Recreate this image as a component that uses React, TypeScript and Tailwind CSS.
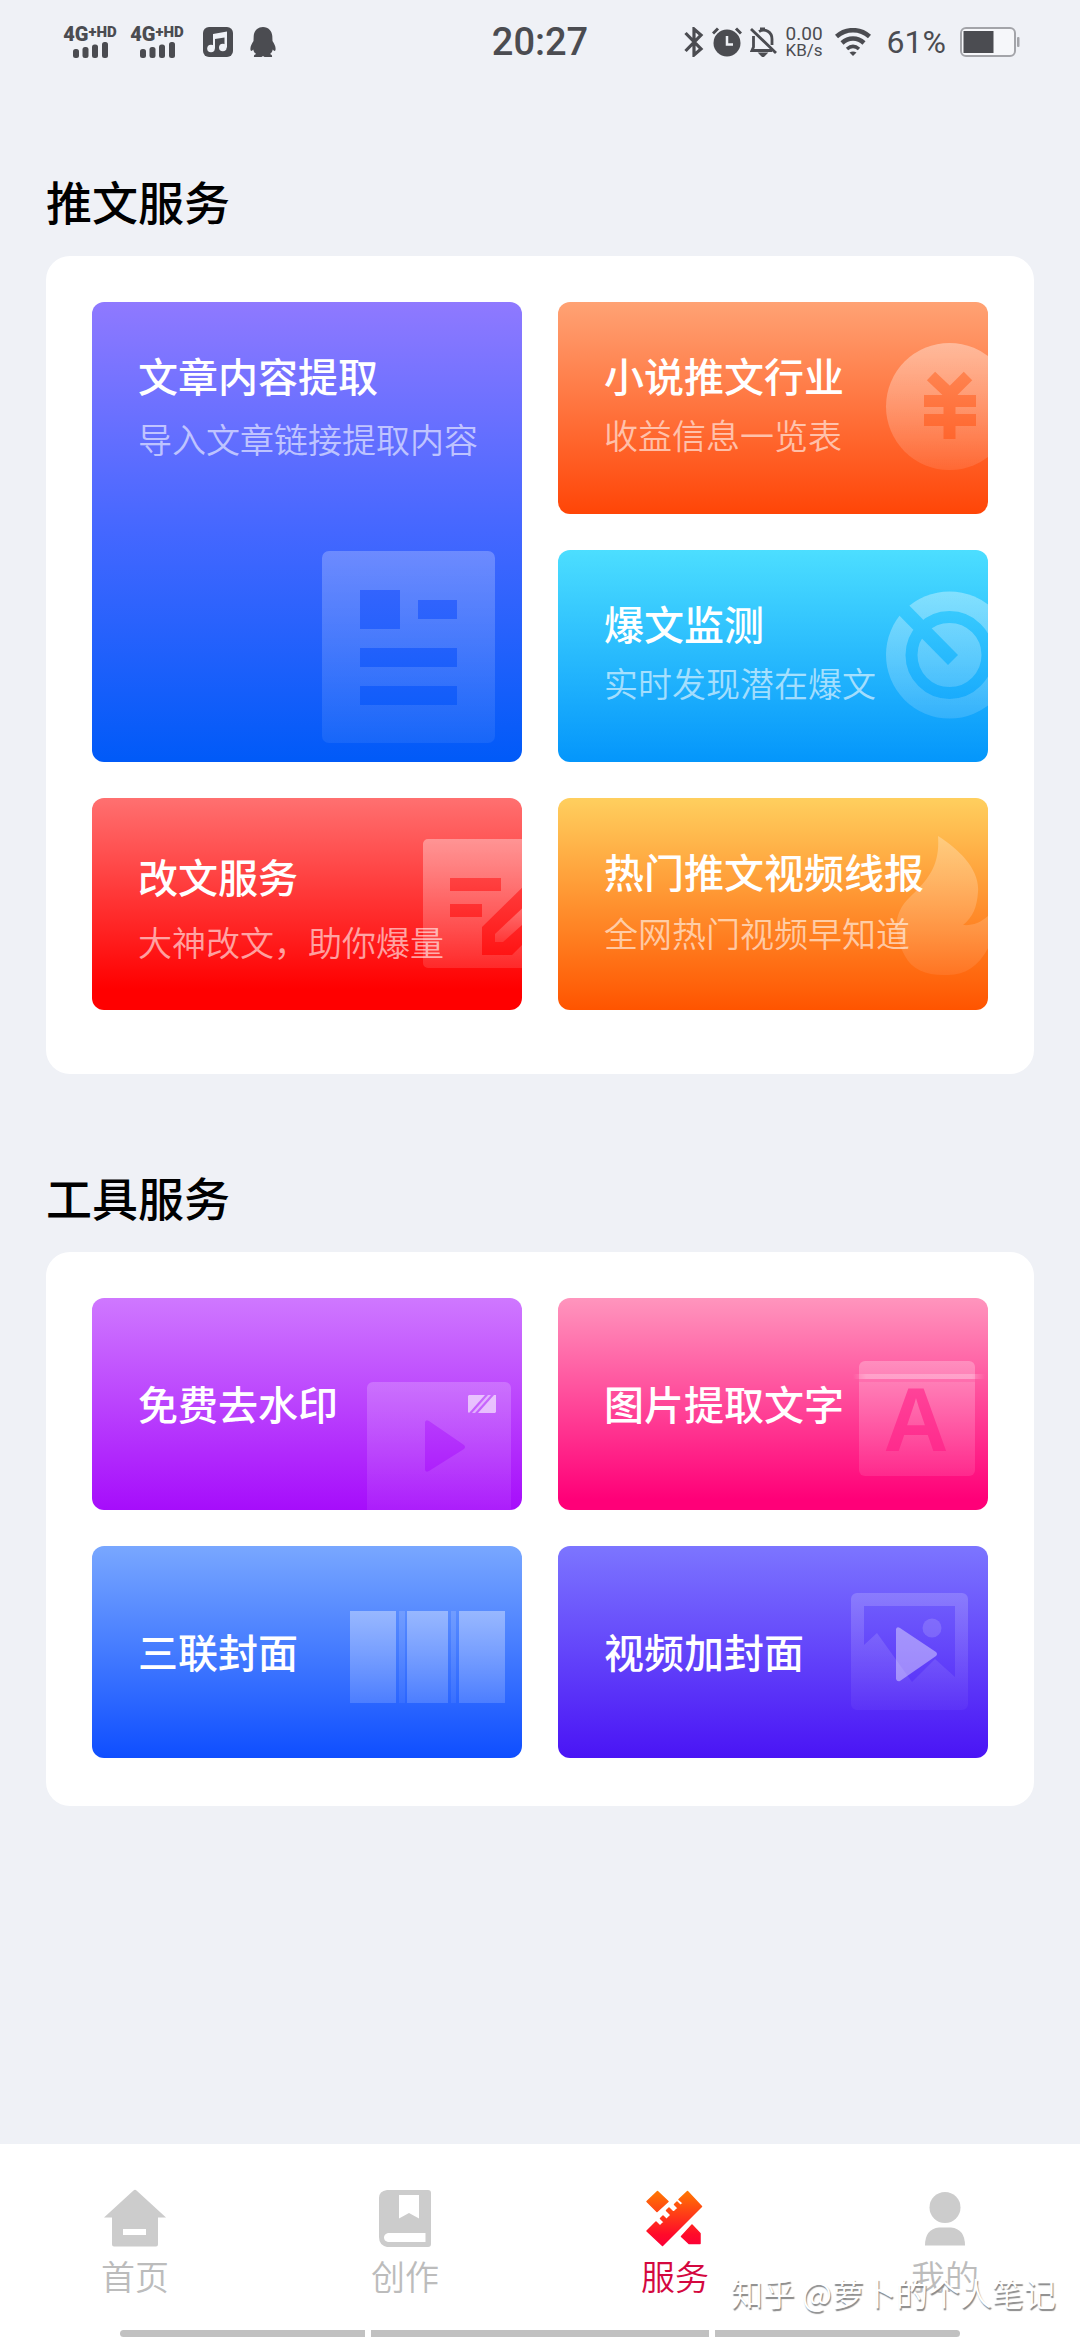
import type { ReactNode } from 'react'

type ArtProps = { id: string; from?: number; to?: number; className?: string; children: ReactNode }

// translucent drawing that sits behind the text, on the right side of a tile
const Art = ({ id, from = 0.36, to = 0.1, className = 'top-0', children }: ArtProps) => (
  <svg aria-hidden="true" viewBox="0 0 200 212" className={`absolute right-0 w-[200px] h-[212px] ${className}`} fill={`url(#${id})`}>
    <defs>
      <linearGradient id={id} x1="0" y1="0" x2="0" y2="1">
        <stop offset="0" stopColor="#fff" stopOpacity={from} />
        <stop offset="1" stopColor="#fff" stopOpacity={to} />
      </linearGradient>
    </defs>
    {children}
  </svg>
)

const ArticleArt = () => (
  <Art id="article" from={0.24} to={0.07} className="bottom-0">
    <path fillRule="evenodd" d="M7 1H166a7 7 0 0 1 7 7V186a7 7 0 0 1-7 7H7a7 7 0 0 1-7-7V8a7 7 0 0 1 7-7ZM38 40V79H78V40ZM96 50V69H135V50ZM38 98V117H135V98ZM38 136V155H135V136Z" />
  </Art>
)

const CoinArt = () => (
  <Art id="coin" from={0.38}>
    <mask id="coin-mask" maskUnits="userSpaceOnUse" x="0" y="0" width="200" height="212">
      <rect width="200" height="212" fill="#fff" />
      <g fill="none" stroke="#000" strokeWidth="12">
        <polyline points="143,74 162,92 180,74" />
        <line x1="136" y1="99" x2="188" y2="99" />
        <line x1="136" y1="118" x2="188" y2="118" />
        <line x1="161.500" y1="90" x2="161.500" y2="137" />
      </g>
    </mask>
    <circle cx="161.500" cy="104.500" r="63.500" mask="url(#coin-mask)" />
  </Art>
)

const RadarArt = () => (
  <Art id="radar" to={0.14}>
    <mask id="radar-mask" maskUnits="userSpaceOnUse" x="0" y="0" width="200" height="212">
      <rect width="200" height="212" fill="#fff" />
      <circle cx="161.500" cy="105" r="38" fill="none" stroke="#000" strokeWidth="12" />
      <line x1="100" y1="44" x2="165" y2="110" stroke="#000" strokeWidth="14" />
    </mask>
    <circle cx="161.500" cy="105" r="63.500" mask="url(#radar-mask)" />
  </Art>
)

const RewriteArt = () => (
  <Art id="rewrite" from={0.36} to={0.12}>
    <path fillRule="evenodd" d="M106 41H210V170H106a5 5 0 0 1-5-5V46a5 5 0 0 1 5-5ZM128 80V93H179V80ZM128 106V119H160V106ZM210 80L160 129V157H190L210 137Z" />
    <path d="M210 101L173 136V144H181L210 118Z" />
  </Art>
)

const FlameArt = () => (
  <Art id="flame" from={0.28} to={0.08}>
    <path d="M150 38C172 52 192 72 190 94C189 109 185 119 175 127C185 128 195 124 204 114V142C194 165 180 177 160 177C140 178 124 172 117 158C104 134 106 114 122 99C142 80 152 66 150 38Z" />
  </Art>
)

const WatermarkArt = () => (
  <Art id="watermark" from={0.2} to={0.06}>
    <path fillRule="evenodd" d="M51 84H183a6 6 0 0 1 6 6V220H45V90a6 6 0 0 1 6-6ZM103 124V172Q104 175 107 173L142 151Q144 149 142 147L107 123Q104 121 103 124Z" />
    <g fill="#fff" fillOpacity="0.6">
      <path d="M147 97H163L147 115L146 114V98Z" />
      <path d="M172 97L156 115H173L174 114V97Z" />
    </g>
    <path d="M166 97H169L153 115H150Z" fill="#fff" fillOpacity="0.5" />
  </Art>
)

const OcrArt = () => (
  <Art id="ocr" from={0.26} to={0.1}>
    <defs>
      <linearGradient id="ocr-letter" x1="0" y1="0" x2="0" y2="1">
        <stop offset="0" stopColor="#ff4a9c" />
        <stop offset="1" stopColor="#ff2389" />
      </linearGradient>
      <linearGradient id="ocr-scan">
        <stop offset="0" stopColor="#fff" stopOpacity="0" />
        <stop offset="0.100" stopColor="#fff" stopOpacity="0.250" />
        <stop offset="0.900" stopColor="#fff" stopOpacity="0.250" />
        <stop offset="1" stopColor="#fff" stopOpacity="0" />
      </linearGradient>
    </defs>
    <rect x="71" y="63" width="116" height="115" rx="6" />
    <rect x="65" y="76" width="132" height="5" fill="url(#ocr-scan)" />
    <rect x="71" y="81" width="116" height="3" fill="#ff4a9c" fillOpacity="0.3" />
    <text x="128" y="153" textAnchor="middle" fill="url(#ocr-letter)" className="font-['Liberation_Sans'] text-[90px] font-bold">
      A
    </text>
  </Art>
)

const TripleArt = () => (
  <Art id="triple" from={0.38} to={0.16}>
    <rect x="28" y="65" width="46" height="92" />
    <rect x="85" y="65" width="41" height="92" />
    <rect x="137" y="65" width="46" height="92" />
    <rect x="77" y="65" width="6" height="92" fillOpacity="0.4" />
    <rect x="129" y="65" width="5" height="92" fillOpacity="0.4" />
  </Art>
)

const CoverArt = () => (
  <Art id="cover" from={0.18} to={0.04}>
    <path fillRule="evenodd" d="M69 47H174a6 6 0 0 1 6 6V158a6 6 0 0 1-6 6H69a6 6 0 0 1-6-6V53a6 6 0 0 1 6-6ZM76 60V99L89 87L124 136L147 113L167 131V60Z" />
    <circle cx="144" cy="82" r="9.500" fill="#fff" fillOpacity="0.15" />
    <path d="M108 83Q109 80 112 82L148 106Q150 108 148 110L112 135Q109 136 108 133Z" fill="#fff" fillOpacity="0.4" />
  </Art>
)

type TileProps = { title: string; sub?: string; className: string; art: ReactNode }

const Tile = ({ title, sub, className, art }: TileProps) => (
  <a href="#" className={`relative flex flex-col overflow-hidden rounded-xl px-[46px] bg-linear-to-b/srgb text-white ${className}`}>
    {art}
    <h3 className="relative text-[40px] leading-14 font-medium whitespace-nowrap">{title}</h3>
    {sub && <p className="relative text-[34px] leading-12 font-[350] text-white/60 whitespace-nowrap">{sub}</p>}
  </a>
)

const SignalIcon = () => (
  <div className="flex flex-col items-center w-[60px]">
    <span className="flex items-start font-['Roboto'] font-black whitespace-nowrap">
      <span className="text-[20px] leading-4">4G</span>
      <span className="text-[15px] leading-3">+HD</span>
    </span>
    <svg aria-hidden="true" viewBox="0 0 35 16" className="w-[35px] h-4" fill="currentColor">
      <rect x="0" y="7" width="6" height="9" rx="2.500" />
      <rect x="9.500" y="5" width="6" height="11" rx="2.500" />
      <rect x="19" y="2.500" width="6" height="13.500" rx="2.500" />
      <rect x="29" y="0" width="6" height="16" rx="2.500" />
    </svg>
  </div>
)

const StatusBar = () => (
  <header className="grid grid-cols-[1fr_auto_1fr] items-center h-[84px] px-[60px] text-[#4b4c51] font-['Roboto',sans-serif]">
    <div className="flex items-center gap-[7px]">
      <SignalIcon />
      <SignalIcon />
      <svg aria-hidden="true" viewBox="0 0 30 30" className="w-[30px] h-[30px] ml-[9px]">
        <rect width="30" height="30" rx="6" fill="currentColor" />
        <g fill="#eff1f6">
          <circle cx="8" cy="21.500" r="3.800" />
          <circle cx="19.800" cy="20.500" r="3.800" />
          <path d="M10 7L24 4.500V20.500H21.500V10.500L12 12V21.500H10Z" />
        </g>
      </svg>
      <svg aria-hidden="true" viewBox="0 0 26 30" className="w-[26px] h-[30px] ml-[10px]" fill="currentColor">
        <path d="M13 0C18.500 0 22 4 22.300 9L22.500 14C24.500 17 26 20 25.500 23C25 24.500 23.800 24 22.800 22.500C22.300 24.500 21.300 26 20 27C21.800 27.800 22.300 28.500 22 30H14.500L13 29L11.500 30H4C3.700 28.500 4.200 27.800 6 27C4.700 26 3.700 24.500 3.200 22.500C2.200 24 1 24.500 .5 23C0 20 1.500 17 3.500 14L3.700 9C4 4 7.500 0 13 0Z" />
      </svg>
    </div>
    <time className="text-[38px] leading-10 font-medium">20:27</time>
    <div className="flex items-center justify-end gap-2">
      <svg aria-hidden="true" viewBox="0 0 20 30" className="w-5 h-[30px]" fill="none" stroke="currentColor" strokeWidth="3.200">
        <path d="M1.500 6L17 22L10 28V2L17 8L1.500 24" />
      </svg>
      <svg aria-hidden="true" viewBox="0 0 30 30" className="w-[30px] h-[30px]">
        <circle cx="15" cy="16" r="13.500" fill="currentColor" />
        <path d="M1 6.500L6 1.500M29 6.500L24 1.500" stroke="currentColor" strokeWidth="3" />
        <path d="M15 9V17.500H21" fill="none" stroke="#eff1f6" strokeWidth="2.500" />
      </svg>
      <svg aria-hidden="true" viewBox="0 0 28 30" className="w-7 h-[30px]" fill="none" stroke="currentColor" strokeWidth="2.800">
        <path d="M1 2L26 26M3.500 9V20L2 23.500H22M9 4.500C15 1 22 5 22 12V18" />
        <path d="M10 2H15M11 27L13 29L15 27Z" />
      </svg>
      <div className="flex flex-col">
        <span className="text-[19px] leading-4">0.00</span>
        <span className="text-[17px] leading-4">KB/s</span>
      </div>
      <svg aria-hidden="true" viewBox="0 0 36 28" className="w-9 h-7 ml-1" fill="none" stroke="currentColor" strokeWidth="4.500">
        <path d="M1.500 8.500C11 0 25 0 34.500 8.500" />
        <path d="M7 15C13.500 9 22.500 9 29 15" />
        <path d="M12 21C16 17.500 20 17.500 24 21" strokeWidth="3.500" />
        <path d="M14.500 24.500Q18 22.500 21.500 24.500L18 28Z" fill="currentColor" stroke="none" />
      </svg>
      <span className="text-[32px] leading-10 ml-2">61%</span>
      <svg aria-hidden="true" viewBox="0 0 60 30" className="w-[60px] h-[30px] ml-1.5">
        <rect x="1" y="1" width="54" height="28" rx="5" fill="#f6f7fa" stroke="#a3a4a9" strokeWidth="2" />
        <rect x="3.500" y="4" width="30" height="22" fill="currentColor" />
        <rect x="57" y="10" width="2.500" height="10" rx="1" fill="#a3a4a9" />
      </svg>
    </div>
  </header>
)

const HomeIcon = () => (
  <path fillRule="evenodd" d="M28.500 2.500Q30 1 31.500 2.500L61 29.500H53V56.500Q53 58.500 51 58.500H9Q7 58.500 7 56.500V29.500H-1ZM18 41V47H41V41Z" />
)

const BookIcon = () => (
  <path fillRule="evenodd" d="M12 2H53Q56 2 56 5V56Q56 59 53 59H12Q4 57 4 49V10Q4 3 12 2ZM24 7V30.500L34 25L44 30.500V7ZM13 45Q9 46 9 49.500Q9 53 13 54H50.500V45Z" />
)

const ToolsIcon = () => (
  <>
    <defs>
      <linearGradient id="tools" gradientUnits="userSpaceOnUse" x1="0" y1="2" x2="0" y2="58">
        <stop offset="0" stopColor="#ff7a00" />
        <stop offset="0.800" stopColor="#ff0a2a" />
        <stop offset="1" stopColor="#fb0038" />
      </linearGradient>
    </defs>
    <g fill="url(#tools)" stroke="url(#tools)" strokeWidth="1.500" strokeLinejoin="round">
      <path d="M12.500 3.500L23 13.500L12 23.500L2 13.500Z" />
      <path d="M42.500 3.500L56.500 18.500L17.500 57.500L2 43L11 34L15 38L19 34L15.500 30.500L18 28L21.500 31.500L26 27L21.500 22.500L24 20L28.500 24.500L33 20L29.500 16.500L32 14L35.500 17.500L38 15L34 11.500Z" />
      <path d="M47 37L55 45.500V55.500H44L36.500 48.500Z" />
    </g>
  </>
)

const UserIcon = () => (
  <>
    <circle cx="30" cy="19.500" r="15.500" />
    <path d="M24 39.500H36Q50 41 50 57.500H10Q10 41 24 39.500Z" />
  </>
)

const tabs = [
  { label: '首页', icon: <HomeIcon /> },
  { label: '创作', icon: <BookIcon /> },
  { label: '服务', icon: <ToolsIcon />, active: true },
  { label: '我的', icon: <UserIcon /> },
]

const App = () => {
  return (
    <div className="flex flex-col min-h-screen bg-[#eff1f6] font-['Noto_Sans_CJK_SC',sans-serif]">
      <StatusBar />
      <main className="flex-1 px-[46px] pt-[84px] pb-12">
        <section>
          <h2 className="text-[46px] leading-16 font-medium text-black">推文服务</h2>
          <div className="grid grid-cols-2 gap-9 auto-rows-[212px] p-[46px] pb-16 mt-6 bg-white rounded-3xl">
            <Tile title="文章内容提取" sub="导入文章链接提取内容" art={<ArticleArt />} className="row-span-2 pt-[45px] gap-3 from-[#8f79ff] via-[#4467ff] to-[#005af8]" />
            <Tile title="小说推文行业" sub="收益信息一览表" art={<CoinArt />} className="pt-[45px] gap-2 from-[#ffa274] to-[#ff4507]" />
            <Tile title="爆文监测" sub="实时发现潜在爆文" art={<RadarArt />} className="pt-[45px] gap-2 from-[#4cdeff] to-[#0496fb]" />
            <Tile title="改文服务" sub="大神改文，助你爆量" art={<RewriteArt />} className="pt-[50px] gap-3.5 from-[#ff7070] to-[#ff0000] to-90%" />
            <Tile title="热门推文视频线报" sub="全网热门视频早知道" art={<FlameArt />} className="pt-[45px] gap-2.5 from-[#ffcf5e] to-[#ff5400]" />
          </div>
        </section>

        <section className="mt-[90px]">
          <h2 className="text-[46px] leading-16 font-medium text-black">工具服务</h2>
          <div className="grid grid-cols-2 gap-9 auto-rows-[212px] p-[46px] pb-12 mt-6 bg-white rounded-3xl">
            <Tile title="免费去水印" art={<WatermarkArt />} className="justify-center pb-0.5 from-[#cf78ff] to-[#a60dfb]" />
            <Tile title="图片提取文字" art={<OcrArt />} className="justify-center pb-0.5 from-[#ff95bd] to-[#ff0078] to-95%" />
            <Tile title="三联封面" art={<TripleArt />} className="justify-center pb-0.5 from-[#79a7ff] to-[#0f4eff]" />
            <Tile title="视频加封面" art={<CoverArt />} className="justify-center pb-0.5 from-[#7c75ff] to-[#4a14f5]" />
          </div>
        </section>
      </main>

      <nav className="relative pt-11 pb-[3px] bg-white">
        <ul className="grid grid-cols-4">
          {tabs.map(({ label, icon, active }) => (
            <li key={label}>
              <a href="#" className={`flex flex-col items-center gap-2 ${active ? 'text-[#d4083f]' : 'text-[#bcbcbc]'}`}>
                <svg aria-hidden="true" viewBox="0 0 60 60" className="w-[60px] h-[60px] overflow-visible" fill="#cccccc">
                  {icon}
                </svg>
                <span className="text-[34px] leading-10 font-[350]">{label}</span>
              </a>
            </li>
          ))}
        </ul>
        <div className="flex gap-1.5 px-[120px] mt-[34px]">
          <span className="flex-[29] h-[7px] bg-[#c1c1c1] rounded-l-full" />
          <span className="flex-[40] h-[7px] bg-[#c1c1c1]" />
          <span className="flex-[29] h-[7px] bg-[#c1c1c1] rounded-r-full" />
        </div>
        <p className="absolute right-6 bottom-7 text-[32px] leading-10 font-[350] text-white whitespace-nowrap text-shadow-[1px_2px_1px_#888888]">知乎 @萝卜的个人笔记</p>
      </nav>
    </div>
  )
}

export default App
